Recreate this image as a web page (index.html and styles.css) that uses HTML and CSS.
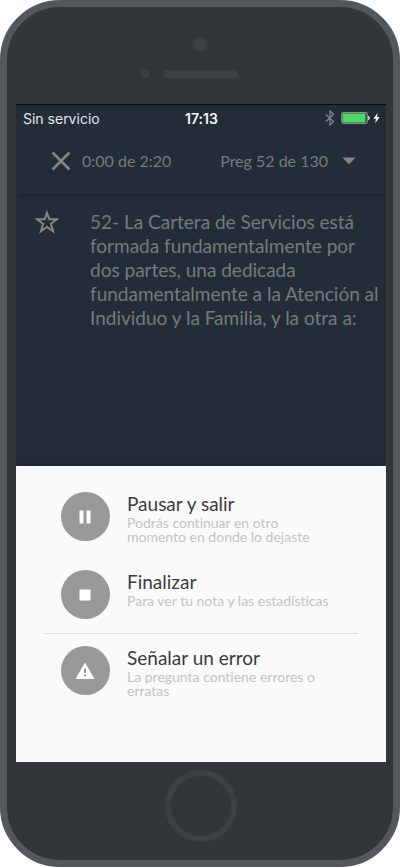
FILE: index.html
```html
<!DOCTYPE html>
<html lang="es">
<head>
<meta charset="utf-8">
<meta name="viewport" content="width=device-width, initial-scale=1">
<title>Test</title>
<link rel="stylesheet" href="styles.css">
</head>
<body>
<div class="phone">
  <div class="phone-top">
    <span class="camera"></span>
    <div class="ear">
      <span class="sensor"></span>
      <span class="speaker"></span>
      <span></span>
    </div>
  </div>
  <main class="screen">
    <div class="status">
      <span>Sin servicio</span>
      <strong class="clock">17:13</strong>
      <span class="status-icons">
        <svg width="10" height="16" viewBox="0 0 10 16" fill="none" stroke="#7f868c" stroke-width="1.2"><path d="M1 4.5 8.5 11.5 5 15V1l3.500 3.500L1 11.500"/></svg>
        <svg width="29" height="12" viewBox="0 0 29 12"><rect x=".7" y=".7" width="25.600" height="10.600" rx="1.800" fill="none" stroke="#8b9297" stroke-width="1.200"/><rect x="1.500" y="1.500" width="23" height="9" rx=".7" fill="#4cd964"/><path d="M27.200 3.800c2 .5 2 3.900 0 4.400z" fill="#f4f4f4"/></svg>
        <svg width="7" height="12" viewBox="0 0 7 12"><path d="M4.700.7.400 6.700h2.500L2.200 11.300 6.700 5H4z" fill="#f4f4f4"/></svg>
      </span>
    </div>
    <header class="toolbar">
      <button class="close" type="button" aria-label="Cerrar">
        <svg width="20" height="20" viewBox="0 0 20 20" fill="none" stroke="#858585" stroke-width="2.500"><path d="M1.500 1.500 18.500 18.500M18.500 1.500 1.500 18.500"/></svg>
      </button>
      <span>0:00 de 2:20</span>
      <button class="picker" type="button">Preg 52 de 130
        <svg width="14" height="8" viewBox="0 0 14 8"><path d="M.5.500h13L7 7.500z" fill="#858585"/></svg>
      </button>
    </header>
    <section class="question">
      <button class="star" type="button" aria-label="Favorita">
        <svg width="24" height="24" viewBox="0 0 24 24" fill="none" stroke="#858585" stroke-width="2"><path d="M12 2.800 14.400 9.300h7.500l-6 4.500 2.200 7.500L12 17l-6.100 4.300 2.200-7.500-6-4.500h7.500z"/></svg>
      </button>
      <p>52- La Cartera de Servicios está<br>formada fundamentalmente por<br>dos partes, una dedicada<br>fundamentalmente a la Atención al<br>Individuo y la Familia, y la otra a:</p>
    </section>
    <section class="sheet">
      <button class="action tall" type="button">
        <span class="disc"><svg width="24" height="24" viewBox="0 0 24 24" fill="#fff"><path d="M5.500 5.500h4v13h-4zM12.500 5.500h4v13h-4z"/></svg></span>
        <span class="text"><span class="title">Pausar y salir</span><span class="sub">Podrás continuar en otro<br>momento en donde lo dejaste</span></span>
      </button>
      <button class="action" type="button">
        <span class="disc"><svg width="24" height="24" viewBox="0 0 24 24" fill="#fff"><rect x="5.500" y="6.500" width="11" height="11" rx=".5"/></svg></span>
        <span class="text"><span class="title">Finalizar</span><span class="sub">Para ver tu nota y las estadísticas</span></span>
      </button>
      <hr class="rule">
      <button class="action" type="button">
        <span class="disc"><svg width="24" height="24" viewBox="0 0 24 24"><path d="M11 3.500 20.500 20h-19z" fill="#fff"/><path d="M10 9.500h2v4.500h-2zM10 15.500h2v2h-2z" fill="#999"/></svg></span>
        <span class="text"><span class="title">Señalar un error</span><span class="sub">La pregunta contiene errores o<br>erratas</span></span>
      </button>
    </section>
  </main>
  <div class="phone-bottom"><span class="home"></span></div>
</div>
</body>
</html>
```
FILE: styles.css
```css
* { box-sizing: border-box; }
body {
  margin: 0;
  background: #fff;
  font-family: Lato, "Liberation Sans", sans-serif;
  font-variant-ligatures: none;
}
button {
  border: 0;
  padding: 0;
  background: none;
  color: inherit;
  font: inherit;
  font-variant-ligatures: none;
  text-align: left;
}
svg { display: block; }
.phone {
  display: flex;
  flex-direction: column;
  min-height: 100vh;
  padding: 0 7px 0 9px;
  border: 7px solid #53585c;
  border-radius: 60px;
  background: #323639;
}
.phone-top {
  display: flex;
  flex-direction: column;
  align-items: center;
  gap: 17px;
  height: 97px;
  padding: 31px 2px 0 0;
}
.camera {
  width: 14px;
  height: 14px;
  border-radius: 50%;
  background: #3c4040;
}
.ear {
  display: grid;
  grid-template-columns: 1fr 75px 1fr;
  gap: 13px;
  align-items: center;
  width: 100%;
}
.sensor {
  justify-self: end;
  width: 9px;
  height: 9px;
  border-radius: 50%;
  background: #3c4040;
}
.speaker {
  height: 8px;
  border-radius: 4px;
  background: #3c4040;
}
.screen {
  display: flex;
  flex: 1;
  flex-direction: column;
  overflow: hidden;
  border-top: 1px solid #0a0c10;
  background: #222d38;
}
.status {
  display: grid;
  grid-template-columns: 1fr auto 1fr;
  align-items: center;
  height: 26px;
  padding: 0 6px 0 7px;
  color: #e4e6e8;
  font-family: Inter, "Liberation Sans", sans-serif;
  font-size: 14px;
}
.clock { font-weight: 600; color: #f4f4f4; }
.status-icons {
  display: flex;
  align-items: center;
  justify-content: flex-end;
  gap: 3px;
}
.status-icons svg:first-child { margin-right: 3px; }
.toolbar {
  display: flex;
  align-items: center;
  height: 63px;
  padding: 0 30px 4px 35px;
  box-shadow: 0 4px 4px -2px #18222b;
  color: #777a7c;
  font-size: 16px;
}
.close { margin-right: 11px; }
.picker {
  display: flex;
  align-items: center;
  gap: 14px;
  margin-left: auto;
}
.question {
  display: flex;
  align-items: flex-start;
  gap: 31px;
  flex: 1;
  padding: 16px 0 16px 19px;
  color: #777a7c;
  font-size: 19px;
  line-height: 24px;
}
.question p { margin: 0; white-space: nowrap; }
.sheet {
  min-height: 296px;
  padding: 25px 28px;
  background: #fafafa;
  box-shadow: 0 0 16px #1e2832;
}
.action {
  display: flex;
  align-items: flex-start;
  gap: 17px;
  width: 100%;
  padding-left: 17px;
}
.tall { margin-bottom: 25px; }
.disc {
  display: grid;
  place-items: center;
  flex: none;
  width: 49px;
  height: 49px;
  margin-top: 1px;
  border-radius: 50%;
  background: #999;
}
.text { display: block; white-space: nowrap; }
.title {
  display: block;
  color: #3c3c3c;
  font-size: 19px;
  line-height: 25px;
}
.sub {
  display: block;
  color: #c4c4c4;
  font-size: 14px;
  line-height: 14px;
}
.rule {
  height: 1px;
  margin: 14px 0 11px;
  border: 0;
  background: #dedede;
}
.phone-bottom {
  display: grid;
  place-items: center;
  height: 98px;
  padding-bottom: 10px;
}
.home {
  width: 72px;
  height: 72px;
  border: 6px solid #3c4040;
  border-radius: 50%;
}
```
